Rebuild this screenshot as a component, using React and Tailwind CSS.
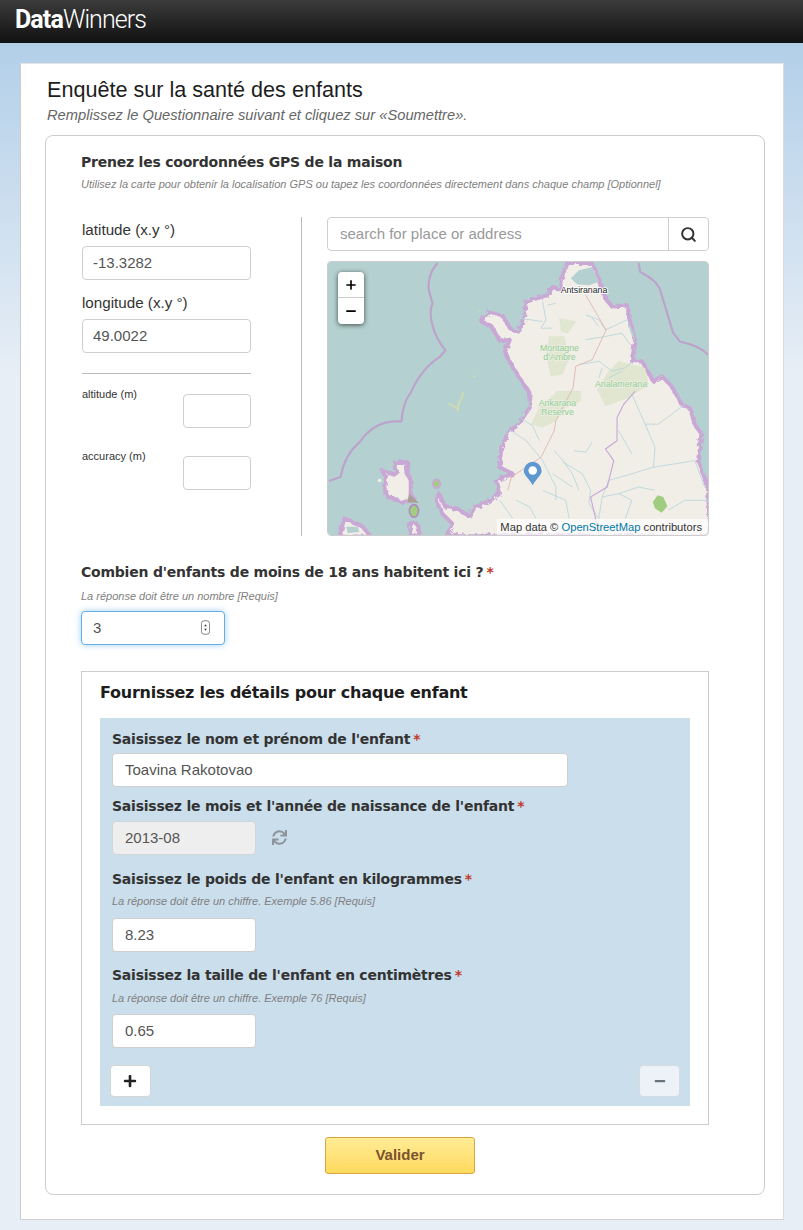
import { Search, Plus, Minus } from 'lucide-react';
import { FaSync, FaPlus, FaMinus } from 'react-icons/fa';

const headingFont = "font-['DejaVu_Sans',sans-serif] font-bold text-[14px] leading-[20px] text-[#333] tracking-[-0.22px]";
const hintFont = "italic text-[11px] leading-[14px] text-[#808080]";
const inputBase = "block h-[34px] rounded-[4px] border pb-[2px] text-[15px] text-[#555] outline-none";
const inputPlain = "border-[#cfcfcf] bg-white";

function Heading({ children, required, className = '' }) {
    return (
        <p className={`${headingFont} ${className}`}>
            {children}
            {required && <span className="ml-[3px] text-[#c0392b]">*</span>}
        </p>
    );
}

function Hint({ children, className = '' }) {
    return <p className={`${hintFont} ${className}`}>{children}</p>;
}

// Map traced by hand, coordinates are reference pixels x3
function MapDrawing() {
    return (
        <svg viewBox="0 0 1149 825" preserveAspectRatio="none" className="block h-full w-full" fill="none">
            <defs>
                <filter id="coast" x="-5%" y="-5%" width="110%" height="110%">
                    <feTurbulence type="fractalNoise" baseFrequency="0.07" numOctaves="2" seed="4" />
                    <feDisplacementMap in="SourceGraphic" scale="18" />
                </filter>
            </defs>
            <rect width="1149" height="825" fill="#b5d0d0" />
            <g stroke="#bca3cc" strokeWidth="6.5" strokeLinejoin="round">
                <path d="M332 3 C310 25 300 60 306 90 L316 125 C300 160 320 225 355 267 L340 285 C300 310 270 350 250 395 C235 415 225 440 222 482 C170 478 130 495 95 545 C65 570 45 610 38 650 L3 662" />
                <path d="M939 3 L944 30 C970 45 990 55 1003 80 L1044 215 L1064 240 C1090 248 1120 252 1149 280" />
            </g>

            <g filter="url(#coast)" stroke="#c9a8d6" strokeWidth="12" strokeLinejoin="round">
                <path
                    fill="#f1eee8"
                    d="M725 3 L709 40 L704 85 L679 75 L664 100 L599 120 L589 190 L570 210 L550 200 L530 165 L490 150 L462 178 L495 195 L520 240 L550 235 L535 270 L554 310 L579 350 L609 395 L614 435 L589 470 L579 490 L549 510 L524 560 L519 620 L559 640 L510 660 L520 700 L490 720 L440 745 L430 770 L390 745 L355 740 L335 700 L328 720 L345 760 L375 790 L360 825 L1155 830 L1149 680 L1119 600 L1129 520 L1109 490 L1094 440 L1069 430 L1039 375 L1009 345 L984 360 L949 300 L919 300 L929 235 L914 185 L904 130 L859 135 L839 110 L819 50 L799 3 Z"
                />
                <path fill="#f1eee8" d="M205 605 L240 605 L240 640 L250 660 L250 700 L265 720 L225 725 L180 710 L170 680 L175 650 L162 630 L205 645 Z" />
                <path fill="#f1eee8" d="M250 830 L248 795 L262 785 L274 800 L275 830 Z" />
                <path fill="#f1eee8" d="M35 830 L45 790 L55 778 L85 790 L105 800 L130 830 Z" />
            </g>
            <path d="M734 50 L759 25 L799 15 L819 60 L789 70 L754 68 Z" fill="#b5d0d0" />
            <path d="M904 170 L924 215 L929 240 L914 210 Z" fill="#b5d0d0" />
            <path d="M55 800 L90 800 L95 815 L60 820 Z" fill="#b5d0d0" />

            {/* islands */}
            <path d="M365 427 L390 442 L400 420 L410 394 M395 425 L392 452" stroke="#cddcb0" strokeWidth="6" strokeLinejoin="round" />
            <path d="M436 350 L444 340 L446 348 Z M452 145 L460 148 L455 151 Z" fill="#cfddb5" />
            <path d="M245 700 L275 728 L240 725 Z" fill="#a99f93" />
            <ellipse cx="260" cy="752" rx="14" ry="19" fill="#a0cd80" stroke="#b08cc0" strokeWidth="5" />
            <ellipse cx="328" cy="670" rx="11" ry="13" fill="#a0cd80" stroke="#c9a8d6" strokeWidth="6" />
            <ellipse cx="156" cy="660" rx="6" ry="5" fill="#f1eee8" />

            <g transform="translate(519 0)">
                {/* protected areas */}
                <g fill="#e0e6d0" stroke="#d3dcbd" strokeDasharray="4 4">
                    <path d="M181 170 L231 180 L206 215 L186 210 Z" />
                    <path d="M150 225 L195 225 L210 290 L190 340 L155 345 L140 280 Z" />
                    <path d="M360 300 L440 320 L450 370 L390 410 L320 435 L295 385 L330 330 Z" />
                    <path d="M175 390 L245 390 L245 420 L200 440 L170 480 L130 500 L95 490 L120 440 Z" />
                </g>
                <path d="M463 725 L478 705 L495 710 L507 738 L490 758 L470 745 Z" fill="#a0cd80" />

                {/* rivers */}
                <g stroke="#b5d5da" strokeWidth="2.5">
                    <path d="M130 120 L140 175 L125 200 L160 200 M60 170 L130 180 M145 130 L170 125" />
                    <path d="M260 160 L300 175 L320 205 L385 175 M260 235 L320 225 L370 215 L395 250 M300 195 L280 170" />
                    <path d="M240 310 L300 300 L340 330 L380 320 L400 300 M300 350 L310 320 M330 350 L370 330" />
                    <path d="M20 500 L80 540 L130 600 L150 640 L170 680 L170 720 M60 470 L100 495 L120 540" />
                    <path d="M165 570 L200 610 L250 640 L275 690 L270 730 L300 775 M225 570 L260 575 L280 545 M190 600 L220 640 L240 690" />
                    <path d="M400 400 L440 490 L480 490 L520 460 L560 430 M440 490 L470 560 L465 620 L400 640 L330 660 L310 710 L300 775 M465 620 L530 610 L590 600 L620 680 M360 510 L400 580" />
                    <path d="M360 700 L420 680 L470 690 M510 750 L560 720 L630 720 M310 710 L360 700 L400 720 L380 775" />
                    <path d="M0 720 L40 775 M50 720 L90 740 L110 775 M130 690 L200 720 L210 775 M160 640 L220 680" />
                </g>

                {/* road and region border */}
                <path d="M260 100 L322 205 L280 295 L230 315 L222 380 L170 480 L165 510 L125 590 L35 650 L25 690" stroke="#dfb0ac" strokeWidth="2.5" />
                <path d="M410 390 L375 430 L355 470 L355 540 L320 565 L345 600 L325 680 L275 710 L290 775 L300 825" stroke="#c9a8d6" strokeWidth="3.5" />

                <g fontFamily="'Liberation Sans', sans-serif" fontSize="26.5" textAnchor="middle">
                    <text x="255" y="95" fill="#222" stroke="#fff" strokeWidth="5" paintOrder="stroke">Antsiranana</text>
                    <g fill="#8fcf8f" stroke="#f1eee8" strokeWidth="4">
                        <text x="181" y="269" paintOrder="stroke">Montagne</text>
                        <text x="181" y="296" paintOrder="stroke">d'Ambre</text>
                        <text x="367" y="379" paintOrder="stroke">Analamerana</text>
                        <text x="175" y="434" paintOrder="stroke">Ankarana</text>
                        <text x="175" y="461" paintOrder="stroke">Reserve</text>
                    </g>
                </g>

                {/* marker */}
                <path d="M100 675 C90 655 73 645 73 631 A27 27 0 0 1 127 631 C127 645 110 655 100 675 Z" fill="#5f98d0" />
                <circle cx="100" cy="630" r="13" fill="#fff" />
            </g>
        </svg>
    );
}

function GpsSection() {
    return (
        <section className="pl-[35px] pr-[55px]">
            <Heading className="mt-[16px]">Prenez les coordonnées GPS de la maison</Heading>
            <Hint className="mt-[5px]">Utilisez la carte pour obtenir la localisation GPS ou tapez les coordonnées directement dans chaque champ [Optionnel]</Hint>

            <div className="mt-[26px] flex h-[319px]">
                <div className="w-[221px] shrink-0 border-r border-[#bbb] pr-[50px] pl-px">
                    <label className="block pt-[4px] text-[15.2px] leading-[18px] text-[#333]">latitude (x.y °)</label>
                    <input className={`${inputBase} ${inputPlain} mt-[7px] w-full px-[10px]`} defaultValue="-13.3282" />
                    <label className="mt-[14px] block text-[15.2px] leading-[18px] text-[#333]">longitude (x.y °)</label>
                    <input className={`${inputBase} ${inputPlain} mt-[7px] w-full px-[10px]`} defaultValue="49.0022" />
                    <hr className="mt-[20px] border-[#bbb]" />
                    <div className="mt-[20px] flex items-start justify-between">
                        <span className="-mt-[7px] text-[11px] leading-[14px] text-[#333]">altitude (m)</span>
                        <input className={`${inputBase} ${inputPlain} w-[68px]`} />
                    </div>
                    <div className="mt-[28px] flex items-start justify-between">
                        <span className="-mt-[7px] text-[11px] leading-[14px] text-[#333]">accuracy (m)</span>
                        <input className={`${inputBase} ${inputPlain} w-[68px]`} />
                    </div>
                </div>

                <div className="ml-[25px] w-[383px]">
                    <div className="flex h-[34px] w-[382px] overflow-hidden rounded-[4px] border border-[#cfcfcf] bg-white">
                        <input className="min-w-0 flex-1 px-3 text-[15px] text-[#555] outline-none placeholder:text-[#999]" placeholder="search for place or address" />
                        <div className="flex w-[40px] items-center justify-center border-l border-[#cfcfcf]">
                            <Search size={17} strokeWidth={2.8} className="text-[#333]" />
                        </div>
                    </div>
                    <div className="relative mt-[10px] h-[275px] overflow-hidden rounded-[4px] border border-[#ccc]">
                        <MapDrawing />
                        <div className="absolute top-[10px] left-[10px] w-[26px] overflow-hidden rounded-[4px] bg-white shadow-[0_1px_5px_rgba(0,0,0,0.65)]">
                            <div className="flex h-[26px] items-center justify-center border-b border-[#ccc]">
                                <Plus size={14} strokeWidth={2.8} className="text-black" />
                            </div>
                            <div className="flex h-[26px] items-center justify-center">
                                <Minus size={14} strokeWidth={3} className="text-black" />
                            </div>
                        </div>
                        <div className="absolute right-0 bottom-0 bg-white/70 pr-[6px] pl-[3px] text-[11.2px] leading-[16px] text-[#333]">
                            Map data © <span className="text-[#0078a8]">OpenStreetMap</span> contributors
                        </div>
                    </div>
                </div>
            </div>
        </section>
    );
}

function ChildRepeat() {
    return (
        <div className="mx-[18px] mt-[14px] h-[388px] bg-[#cbdeec] pt-[11px] pr-[10px] pl-[12px]">
            <Heading required>Saisissez le nom et prénom de l'enfant</Heading>
            <input className={`${inputBase} ${inputPlain} mt-[4px] w-[456px] px-3`} defaultValue="Toavina Rakotovao" />

            <Heading required className="mt-[9px]">Saisissez le mois et l'année de naissance de l'enfant</Heading>
            <div className="mt-[5px] flex items-center">
                <input className={`${inputBase} w-[144px] border-[#d2d6d9] bg-[#eeeeee] px-3`} defaultValue="2013-08" readOnly />
                <FaSync size={15} className="ml-[16px] -translate-y-px text-[#8d959b]" />
            </div>

            <Heading required className="mt-[14px]">Saisissez le poids de l'enfant en kilogrammes</Heading>
            <Hint className="mt-[5px]">La réponse doit être un chiffre. Exemple 5.86 [Requis]</Hint>
            <input className={`${inputBase} ${inputPlain} mt-[10px] w-[144px] px-3`} defaultValue="8.23" />

            <Heading required className="mt-[13px]">Saisissez la taille de l'enfant en centimètres</Heading>
            <Hint className="mt-[6px]">La réponse doit être un chiffre. Exemple 76 [Requis]</Hint>
            <input className={`${inputBase} ${inputPlain} mt-[9px] w-[144px] px-3`} defaultValue="0.65" />

            <div className="mt-[17px] -ml-[2px] flex justify-between">
                <button className="flex h-[32px] w-[41px] items-center justify-center rounded-[4px] border border-[#d5d5d5] bg-white">
                    <FaPlus size={14} className="-translate-x-px text-[#222]" />
                </button>
                <button className="flex h-[32px] w-[41px] items-center justify-center rounded-[4px] border border-[#d5dbe0] bg-[#edf2f8]">
                    <FaMinus size={12} className="text-[#68727c]" />
                </button>
            </div>
        </div>
    );
}

export default function App() {
    return (
        <div className="min-h-[1230px] bg-[linear-gradient(#b2cfe8_43px,#e7eef6_375px)] font-['Liberation_Sans',sans-serif]">
            <header className="flex h-[43px] items-center bg-gradient-to-b from-[#3c3c3c] to-[#111] pb-[4px] pl-[15px] font-['Roboto',sans-serif] text-[25px] tracking-[-0.9px] text-white">
                <span className="font-bold">Data</span>
                <span className="font-light">Winners</span>
            </header>

            <main className="mx-[20px] mt-[20px] h-[1157px] w-[764px] border border-t-[#e4e4e4] border-r-[#dcdcdc] border-b-[#cfcfcf] border-l-[#cccccc] bg-white pl-[24px]">
                <h1 className="mt-[13px] pl-[2px] text-[21.6px] leading-[26px] text-[#1d1d1d]">Enquête sur la santé des enfants</h1>
                <p className="mt-[2px] pl-[2px] text-[14.7px] leading-[20px] text-[#666] italic">Remplissez le Questionnaire suivant et cliquez sur «Soumettre».</p>

                <div className="mt-[10px] h-[1060px] w-[720px] rounded-[8px] border border-[#ccc]">
                    <GpsSection />

                    <div className="mt-[26px] pl-[35px]">
                        <Heading required>Combien d'enfants de moins de 18 ans habitent ici ?</Heading>
                        <Hint className="mt-[7px]">La réponse doit être un nombre [Requis]</Hint>
                        <div className="relative mt-[8px] w-[144px]">
                            <input className={`${inputBase} w-full border-[#66afe9] bg-white px-[11px] shadow-[0_0_6px_rgba(102,175,233,0.6)]`} defaultValue="3" />
                            <svg viewBox="0 0 10 16" className="absolute top-[9px] right-[15px] h-[15px] w-[9px]" fill="none">
                                <rect x="0.5" y="0.5" width="9" height="15" rx="3" stroke="#777" />
                                <path d="M3.5 6.5 L5 4.5 L6.5 6.5 Z M3.5 9.5 L5 11.5 L6.5 9.5 Z" fill="#333" />
                            </svg>
                        </div>
                    </div>

                    <div className="mt-[26px] ml-[35px] h-[454px] w-[628px] border border-[#ccc]">
                        <h2 className="mt-[10px] pl-[18px] font-['DejaVu_Sans',sans-serif] text-[16px] leading-[22px] font-bold tracking-[-0.25px] text-[#1d1d1d]">Fournissez les détails pour chaque enfant</h2>
                        <ChildRepeat />
                    </div>

                    <button className="mx-auto mt-[12px] flex h-[37px] w-[150px] -translate-x-[5px] items-center justify-center rounded-[3px] border border-[#d9a441] bg-gradient-to-b from-[#ffec95] to-[#ffd95c] text-[15px] font-bold text-[#7a5230]">
                        Valider
                    </button>
                </div>
            </main>
        </div>
    );
}
